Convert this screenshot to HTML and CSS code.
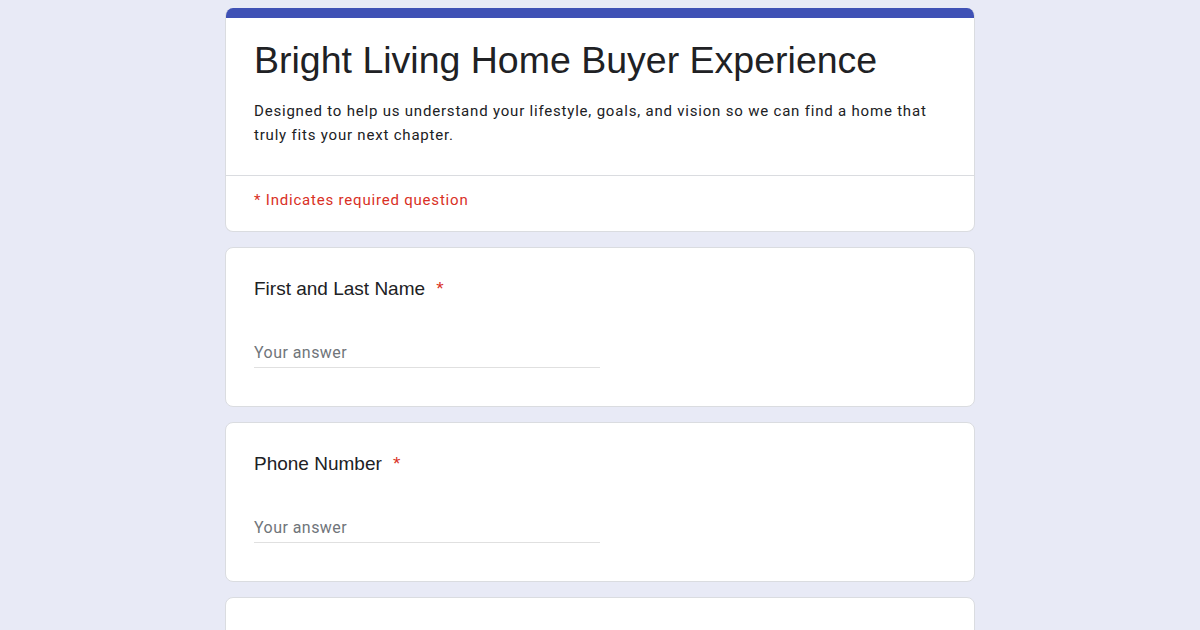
FILE: index.html
```html
<!DOCTYPE html>
<html lang="en">
<head>
<meta charset="utf-8">
<title>Bright Living Home Buyer Experience</title>
<link rel="stylesheet" href="styles.css">
</head>
<body>
<main class="form">
  <section class="card header-card">
    <div class="accent"></div>
    <div class="header-main">
      <h1 class="form-title">Bright Living Home Buyer Experience</h1>
      <p class="form-desc">Designed to help us understand your lifestyle, goals, and vision so we can find a home that truly fits your next chapter.</p>
    </div>
    <div class="header-req">* Indicates required question</div>
  </section>

  <section class="card question">
    <div class="q-title">First and Last Name <span class="req">*</span></div>
    <div class="answer">Your answer</div>
  </section>

  <section class="card question">
    <div class="q-title">Phone Number <span class="req">*</span></div>
    <div class="answer">Your answer</div>
  </section>

  <section class="card question-empty"></section>
</main>
</body>
</html>
```

FILE: styles.css
```css
html, body {
  margin: 0;
  padding: 0;
  background: #e8eaf6;
}
body {
  font-family: Roboto, "Liberation Sans", Arial, sans-serif;
  color: #202124;
  height: 630px;
  overflow: hidden;
}
.form {
  width: 750px;
  margin: 8px auto 0;
  display: flex;
  flex-direction: column;
  gap: 15px;
}
.card {
  box-sizing: border-box;
  background: #fff;
  border: 1px solid #dadce0;
  border-radius: 8px;
  overflow: hidden;
}
.header-card {
  border-top: none;
}
.accent {
  height: 10px;
  background: #3f51b5;
  margin: 0 -1px;
}
.header-main {
  padding: 20px 28px 28px;
  border-bottom: 1px solid #dadce0;
}
.form-title {
  margin: 0;
  font-family: "Liberation Sans", Arial, sans-serif;
  font-weight: 400;
  font-size: 37.5px;
  line-height: 44px;
  color: #202124;
}
.form-desc {
  margin: 17px 0 0;
  font-family: Roboto, "Liberation Sans", Arial, sans-serif;
  font-size: 15px;
  line-height: 24px;
  letter-spacing: 0.8px;
  color: #202124;
}
.header-req {
  padding: 14px 28px 21px;
  font-size: 15px;
  line-height: 20px;
  letter-spacing: 0.8px;
  color: #d93025;
}
.question {
  padding: 29px 28px 38px;
}
.question-empty {
  height: 160px;
  flex-shrink: 0;
}
.q-title {
  font-family: "Liberation Sans", Arial, sans-serif;
  font-size: 19px;
  line-height: 24px;
  color: #202124;
}
.req {
  color: #d93025;
  margin-left: 6px;
}
.answer {
  margin-top: 40px;
  width: 346px;
  height: 27px;
  box-sizing: border-box;
  border-bottom: 1px solid #e0e0e0;
  font-size: 16px;
  line-height: 24px;
  letter-spacing: 0.45px;
  color: #70757a;
}
```
